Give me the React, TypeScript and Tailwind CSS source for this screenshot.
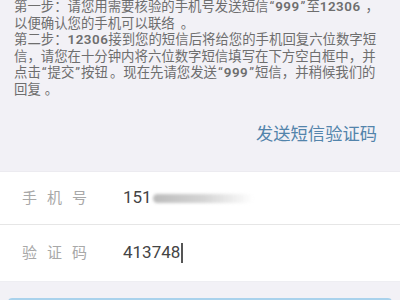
import React from "react";

const font = { fontFamily: '"Roboto", "Noto Sans CJK SC", sans-serif' };

function Q({ children }: { children: React.ReactNode }) {
  return (
    <>
      <span className="mx-[1px]">“</span>
      {children}
      <span className="mx-[1px]">”</span>
    </>
  );
}

function N({ children }: { children: React.ReactNode }) {
  return <b className="font-semibold tracking-[0.5px]">{children}</b>;
}

export default function App() {
  return (
    <div
      className="w-[400px] h-[300px] overflow-hidden bg-[#f2f1f6] flex flex-col"
      style={font}
    >
      <div className="h-[171px] shrink-0 flex flex-col px-[14px]">
        <div className="mt-[-1px] text-[13.4px] leading-[16.6px] text-[#6e6e6e] whitespace-nowrap">
          <div>第一步：请您用需要核验的手机号发送短信<Q><N>999</N></Q>至<N>12306</N><span className="ml-[5px]">，</span></div>
          <div>以便确认您的手机可以联络<span className="ml-[6px]">。</span></div>
          <div>第二步：<N>12306</N>接到您的短信后将给您的手机回复六位数字短</div>
          <div>信，请您在十分钟内将六位数字短信填写在下方空白框中，并</div>
          <div>点击<Q>提交</Q>按钮<span className="ml-[2px]">。</span>现在先请您发送<Q><N>999</N></Q>短信，并稍候我们的</div>
          <div>回复<span className="ml-[4px]">。</span></div>
        </div>
        <div className="mt-[25px] flex justify-end pr-[9px]">
          <span className="text-[17.3px] leading-[20px] text-[#5384ab]">发送短信验证码</span>
        </div>
      </div>
      <div className="bg-white shrink-0 border-t border-[#ecebf0]">
        <div className="h-[53px] flex items-center border-b border-[#e6e6e6]">
          <span className="w-[123px] pl-[22px] text-[15px] tracking-[10px] text-[#a8a8a8]">手机号</span>
          <span className="text-[17px] text-[#444] flex items-center">
            151
            <span className="ml-[1px] inline-block w-[100px] h-[9px] rounded-full bg-gradient-to-r from-[#bcbcbc] via-[#d4d4d4] to-transparent blur-[1.5px]" />
          </span>
        </div>
        <div className="h-[56px] flex items-center">
          <span className="w-[123px] pl-[22px] text-[15px] tracking-[10px] text-[#a8a8a8]">验证码</span>
          <span className="text-[17px] text-[#444] flex items-center">
            413748
            <span className="ml-[1px] inline-block w-[1.5px] h-[20px] bg-[#555]" />
          </span>
        </div>
      </div>
      <div className="flex-1 px-[8px] pt-[16px] border-t border-[#eeeef2]">
        <div className="h-[40px] rounded-[4px] bg-[#4b8fc1] border-t-2 border-[#a9d2ec]" />
      </div>
    </div>
  );
}
